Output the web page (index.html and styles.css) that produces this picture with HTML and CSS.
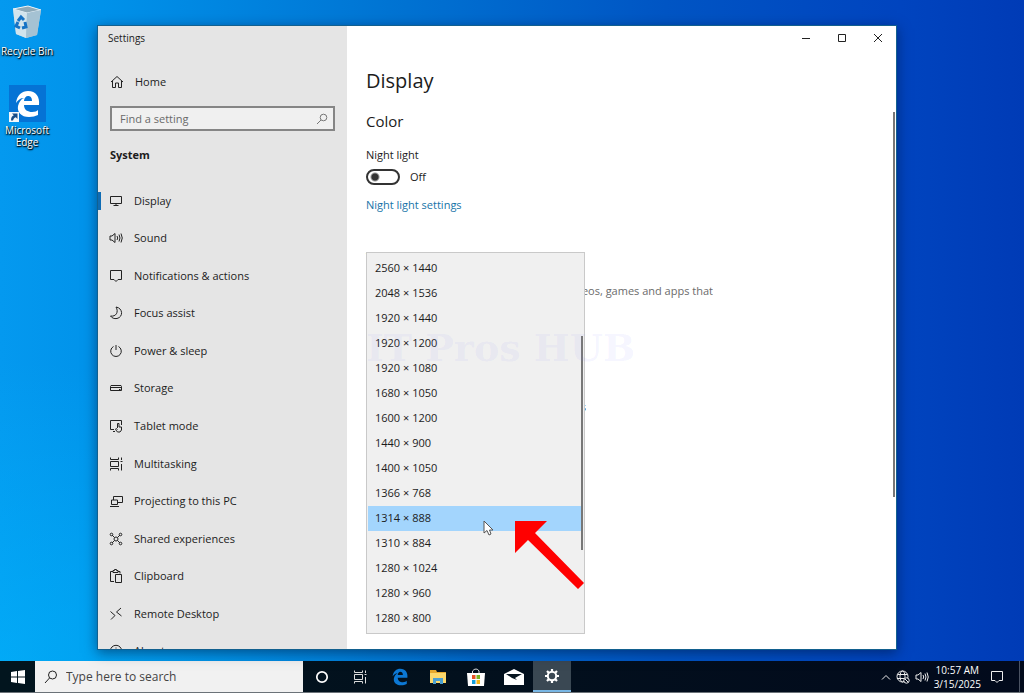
FILE: index.html
```html
<!DOCTYPE html>
<html lang="en">
<head>
<meta charset="utf-8">
<meta name="viewport" content="width=device-width, initial-scale=1">
<title>Settings - Display</title>
<link rel="stylesheet" href="styles.css">
</head>
<body>
<main class="desktop">
  <div class="shortcuts">
    <a class="shortcut" href="#bin">
      <svg width="34" height="38" viewBox="0 0 34 38">
        <path d="M3 4 18 1 31 5 27 30 16 33 6 29Z" fill="#b9d3e2"/>
        <path d="M3 4 18 1 31 5 17 8Z" fill="#8ea9b8" stroke="#e8f3fa"/>
        <path d="M3 4 17 8 16 33 6 29Z" fill="#d5e5ee" opacity=".9"/>
        <path d="M17 8 31 5 27 30 16 33Z" fill="#a5c2d3"/>
        <path d="M8 16 11 12 14 15M15 17 16 22 12 23M10 23 6 21 8 17" fill="none" stroke="#1673c5" stroke-width="3"/>
      </svg>
      <span>Recycle Bin</span>
    </a>
    <a class="shortcut" href="#edge">
      <svg width="37" height="37" viewBox="0 0 37 37">
        <path d="M0 0H37V37H0Z" fill="#0573d5"/>
        <path d="M7 18C8 10 13 6 19 6C27 6 31 12 30 20H15C15 25 19 27 23 27C26 27 28 26 29 25V30C26 31 24 32 20 32C12 32 8 27 9 21C10 17 12 14 15 13C11 13 9 15 7 18ZM15 16H23C23 12 21 11 19 11C17 11 15 13 15 16Z" fill="#fff" fill-rule="evenodd"/>
        <path d="M0 27H10V37H0Z" fill="#f4f8fb"/>
        <path d="M3 28.500H8.500V34L6.800 32.300C5 33 4.500 34 4 35.500H2C2 32.500 3 31 4.800 30.300Z" fill="#174c87"/>
      </svg>
      <span>Microsoft Edge</span>
    </a>
  </div>

  <section class="window" aria-label="Settings">
    <aside class="sidebar">
      <h1 class="caption">Settings</h1>
      <a class="home" href="#home">
        <svg class="icon" viewBox="0 0 14 14"><path d="M1 7 7 1.500 13 7M2.500 6V12.500H5.500V8H8.500V12.500H11.500V6"/></svg>
        Home
      </a>
      <div class="search">
        <input type="search" placeholder="Find a setting" aria-label="Find a setting">
        <svg width="12" height="12" viewBox="0 0 12 12"><circle cx="7.500" cy="4.500" r="3.300"/><path d="M5 7 1 11"/></svg>
      </div>
      <h2 class="group">System</h2>
      <nav class="nav">
        <a class="current" href="#display"><svg class="icon" viewBox="0 0 14 14"><path d="M1.500 2.500H12.500V9.500H1.500ZM7 9.500V12M4.500 11.500H9.500"/></svg>Display</a>
        <a href="#sound"><svg class="icon" viewBox="0 0 14 14"><path d="M1 5H3L6 2.500V11.500L3 9H1ZM8 5Q9.500 7 8 9M10 3.500Q12 7 10 10.500M12 2.500Q14.500 7 12 11.500"/></svg>Sound</a>
        <a href="#notifications"><svg class="icon" viewBox="0 0 14 14"><path d="M1.500 1.500H12.500V10.500H9L7 12.500 5 10.500H1.500Z"/></svg>Notifications &amp; actions</a>
        <a href="#focus"><svg class="icon" viewBox="0 0 14 14"><path d="M7 1C14 2 14.500 11 8 12.500 5 13 3 12 1.500 10 7 11 10 6 7 1Z"/></svg>Focus assist</a>
        <a href="#power"><svg class="icon" viewBox="0 0 14 14"><path d="M4.500 2.500A5.300 5.300 0 1 0 9.500 2.500M7 1V6"/></svg>Power &amp; sleep</a>
        <a href="#storage"><svg class="icon" viewBox="0 0 14 14"><path d="M2 4.500H12L12.500 5.500V9.500H1.500V5.500ZM1.500 6.500H12.500M10 8.500H11.500"/></svg>Storage</a>
        <a href="#tablet"><svg class="icon" viewBox="0 0 14 14"><path d="M5 10.500H1.500V1.500H12.500V6M4 12.500H6M8.500 9V4.500H10V8H12.500V11L11 13H8.500L6.500 10.500 7 9.500 8.500 10.500"/></svg>Tablet mode</a>
        <a href="#multitasking"><svg class="icon" viewBox="0 0 14 14"><path d="M1.500 .5V2.500H9.500V.5M1.500 4.500H9.500V9.500H1.500ZM1.500 13.500V11.500H9.500V13.500M12.500 .5V3M12.500 7V13.500M11.500 4.500H13.500"/></svg>Multitasking</a>
        <a href="#projecting"><svg class="icon" viewBox="0 0 14 14"><path d="M4.500 6V2.500H13.500V8.500H9M2.500 6H8.500V10.500H2.500ZM1 12.500H10"/></svg>Projecting to this PC</a>
        <a href="#shared"><svg class="icon" viewBox="0 0 14 14"><path d="M3 3 5.500 5.500M11 3 8.500 5.500M3 11 5.500 8.500M11 11 8.500 8.500"/><circle cx="2.500" cy="2.500" r="1.300"/><circle cx="11.500" cy="2.500" r="1.300"/><circle cx="2.500" cy="11.500" r="1.300"/><circle cx="11.500" cy="11.500" r="1.300"/><circle cx="7" cy="7" r="2"/></svg>Shared experiences</a>
        <a href="#clipboard"><svg class="icon" viewBox="0 0 14 14"><path d="M5 12.500H1.500V2.500H4M9 2.500H11V4.500M4 1.500H5.500V.5H7.500V1.500H9V3.500H4ZM6.500 5.500H12.500V13.500H6.500Z"/></svg>Clipboard</a>
        <a href="#remote"><svg class="icon" viewBox="0 0 14 14"><path d="M1.500 4.500 6 8.500 2 12.500M12 1 7.500 5 12.500 9"/></svg>Remote Desktop</a>
        <a href="#about"><svg class="icon" viewBox="0 0 14 14"><circle cx="7" cy="7" r="5.700"/><path d="M7 6V10M7 3.500V4.500"/></svg>About</a>
      </nav>
    </aside>

    <div class="content">
      <div class="controls">
        <button type="button" aria-label="Minimize"><svg width="10" height="10" viewBox="0 0 10 10"><path d="M1 5.500H9"/></svg></button>
        <button type="button" aria-label="Maximize"><svg width="10" height="10" viewBox="0 0 10 10"><path d="M1.500 1.500H8.500V8.500H1.500Z"/></svg></button>
        <button type="button" aria-label="Close"><svg width="10" height="10" viewBox="0 0 10 10"><path d="M1 1 9 9M9 1 1 9"/></svg></button>
      </div>
      <div class="page">
        <h2 class="title">Display</h2>
        <h3 class="heading">Color</h3>
        <label class="label" for="night">Night light</label>
        <div class="toggle"><input id="night" type="checkbox" role="switch"><span>Off</span></div>
        <a class="link" href="#night-settings">Night light settings</a>
        <h3 class="heading heading-hd">Windows HD Color</h3>
        <p class="note">Get a brighter and more vibrant picture in videos, games and apps that</p>
        <p class="size-label">Change the size of text, apps, and other items</p>
        <div class="popup">
          <select size="15" aria-label="Display resolution">
            <option>2560 × 1440</option>
            <option>2048 × 1536</option>
            <option>1920 × 1440</option>
            <option>1920 × 1200</option>
            <option>1920 × 1080</option>
            <option>1680 × 1050</option>
            <option>1600 × 1200</option>
            <option>1440 × 900</option>
            <option>1400 × 1050</option>
            <option>1366 × 768</option>
            <option selected>1314 × 888</option>
            <option>1310 × 884</option>
            <option>1280 × 1024</option>
            <option>1280 × 960</option>
            <option>1280 × 800</option>
          </select>
          <span class="popup-scroll"></span>
          <svg class="pointer" width="11" height="17" viewBox="0 0 11 17"><path d="M1 1V13L4 10.500 6 15 8 14 6.500 10H10Z" fill="#fff" stroke="#555"/></svg>
          <svg class="arrow" width="70" height="70" viewBox="0 0 70 70"><path d="M0 0H32L20 12 69 62 63 68 13 19 0 32Z" fill="#f00"/></svg>
        </div>
        <span class="watermark">IT Pros HUB</span>
      </div>
      <span class="page-scroll"></span>
    </div>
  </section>
</main>

<footer class="taskbar">
  <button class="start" type="button" aria-label="Start"><svg width="14" height="14" viewBox="0 0 14 14" fill="#fff"><path d="M0 2 6 1V6.500H0ZM7 1 14 0V6.500H7ZM0 7.500H6V13L0 12ZM7 7.500H14V14L7 13Z"/></svg></button>
  <div class="find">
    <svg width="14" height="14" viewBox="0 0 14 14"><circle cx="8.500" cy="5" r="4"/><path d="M5.500 8 1 13"/></svg>
    <input type="text" placeholder="Type here to search" aria-label="Type here to search">
  </div>
  <div class="apps">
    <button type="button" aria-label="Cortana"><svg width="14" height="14" viewBox="0 0 14 14"><circle cx="7" cy="7" r="5.200" fill="none" stroke="#fff" stroke-width="1.700"/></svg></button>
    <button type="button" aria-label="Task View"><svg width="14" height="14" viewBox="0 0 14 14"><path d="M1.500 .5V2.500H9.500V.5M1.500 4.500H9.500V9.500H1.500ZM1.500 13.500V11.500H9.500V13.500M12.500 .5V3M12.500 7V13.500M11.500 4.500H13.500" fill="none" stroke="#ddd"/></svg></button>
  </div>
  <div class="apps">
    <button type="button" aria-label="Edge"><svg width="18" height="18" viewBox="5 5 27 28"><path d="M7 18C8 10 13 6 19 6C27 6 31 12 30 20H15C15 25 19 27 23 27C26 27 28 26 29 25V30C26 31 24 32 20 32C12 32 8 27 9 21C10 17 12 14 15 13C11 13 9 15 7 18ZM15 16H23C23 12 21 11 19 11C17 11 15 13 15 16Z" fill="#0c78d4" fill-rule="evenodd"/></svg></button>
    <button type="button" aria-label="File Explorer"><svg width="18" height="16" viewBox="0 0 18 16"><path d="M1 1H7L8 3H17V14H1Z" fill="#e6a92e"/><path d="M1 4H17V14H1Z" fill="#fbd86c"/><path d="M4 15V9H14V15H11V12H7V15Z" fill="#4b9fd0"/></svg></button>
    <button type="button" aria-label="Store"><svg width="18" height="18" viewBox="0 0 18 18"><path d="M5.500 6V3Q7 1 9 1T12 3V6" fill="none" stroke="#ddd"/><path d="M0 5H18L17 18H1Z" fill="#fff"/><path d="M5 7H8.500V11H5Z" fill="#e85125"/><path d="M9.500 7H13V11H9.500Z" fill="#7cb51f"/><path d="M5 12H8.500V16H5Z" fill="#159edb"/><path d="M9.500 12H13V16H9.500Z" fill="#f4b41a"/></svg></button>
    <button type="button" aria-label="Mail"><svg width="20" height="16" viewBox="0 0 20 16"><path d="M0 5 10 0 20 5V16H0Z" fill="#fff"/><path d="M2 5H18L11 9 13 11 8 9Z" fill="#071520"/></svg></button>
    <button class="running" type="button" aria-label="Settings"><svg width="16" height="16" viewBox="0 0 16 16" fill="none" stroke="#fff"><circle cx="8" cy="8" r="4.200" stroke-width="2"/><path d="M8 1V4M8 12V15M1 8H4M12 8H15M3 3 5 5M11 11 13 13M13 3 11 5M5 11 3 13" stroke-width="2.200"/></svg></button>
  </div>
  <div class="tray">
    <svg width="10" height="10" viewBox="0 0 10 10"><path d="M1 7.500 5 3.500 9 7.500"/></svg>
    <svg width="14" height="14" viewBox="0 0 14 14"><circle cx="6.500" cy="6.500" r="5.500"/><ellipse cx="6.500" cy="6.500" rx="2.500" ry="5.500"/><path d="M1.500 4.500H11.500M1 8.500H8"/><circle cx="10.500" cy="10.500" r="2.700" fill="#020b1c"/><path d="M9 9 12 12"/></svg>
    <svg width="14" height="14" viewBox="0 0 14 14"><path d="M1 5H3L6 2.500V11.500L3 9H1ZM8 5Q9.500 7 8 9M10 3.500Q12 7 10 10.500M12 2.500Q14.500 7 12 11.500"/></svg>
    <time class="clock" datetime="2025-03-15T10:57"><span>10:57 AM</span><span>3/15/2025</span></time>
    <svg class="center" width="14" height="14" viewBox="0 0 14 14"><path d="M1.500 1.500H12.500V10.500H9L7 12.500 5 10.500H1.500Z"/></svg>
  </div>
</footer>
</body>
</html>
```
FILE: styles.css
```css
* {
  box-sizing: border-box;
}

body {
  margin: 0;
  height: 100vh;
  display: grid;
  grid-template-rows: 1fr 32px;
  overflow: hidden;
  font: 11px/16px "Open Sans", "Noto Sans", sans-serif;
  color: #1c1c1c;
}

h1, h2, h3, p {
  margin: 0;
  font-size: inherit;
  font-weight: 400;
}

a {
  color: inherit;
  text-decoration: none;
}

button {
  padding: 0;
  border: 0;
  background: none;
}

svg {
  flex: none;
}

input, select {
  font: inherit;
  color: inherit;
}

.desktop {
  position: relative;
  min-height: 0;
  background:
    radial-gradient(ellipse 480px 300px at 0 100%, rgba(0, 190, 255, .45), transparent),
    linear-gradient(90deg, #0499ef 0%, #0092ea 10%, #0074d3 38%, #0055c4 65%, #0044bf 88%, #003bb6 100%);
}

.shortcuts {
  display: flex;
  flex-direction: column;
  gap: 28px;
  width: 54px;
  padding-top: 5px;
}

.shortcut {
  display: flex;
  flex-direction: column;
  align-items: center;
  gap: 2px;
  font-size: 10px;
  line-height: 12px;
  color: #fff;
  text-align: center;
  text-shadow: 0 1px 2px #000, 1px 1px 1px #000;
}

.shortcut:first-child span {
  white-space: nowrap;
}

.window {
  position: absolute;
  top: 25px;
  right: 127px;
  bottom: 11px;
  left: 97px;
  display: grid;
  grid-template-columns: 249px 1fr;
  overflow: hidden;
  border: 1px solid #12608f;
  background: #fff;
  box-shadow: 0 3px 12px rgba(0, 15, 50, .5);
}

.sidebar {
  display: flex;
  flex-direction: column;
  min-height: 0;
  background: #e5e5e5;
}

.sidebar > * {
  flex: none;
}

.caption {
  padding: 4px 10px;
  font-size: 10px;
}

.home {
  display: flex;
  align-items: center;
  gap: 11px;
  margin-top: 23px;
  padding: 0 12px;
  line-height: 18px;
}

.icon {
  width: 14px;
  height: 14px;
  fill: none;
  stroke: #222;
}

.search {
  display: flex;
  align-items: center;
  height: 25px;
  margin: 15px 12px 0;
  padding: 0 5px 0 8px;
  border: 2px solid #858585;
  background: #f0f0f0;
}

.search input {
  flex: 1;
  min-width: 0;
  padding: 0;
  border: 0;
  background: none;
  outline: 0;
}

.search input::placeholder {
  color: #6a6a6a;
  opacity: 1;
}

.search svg {
  fill: none;
  stroke: #777;
}

.group {
  margin: 16px 12px 19px;
  font-weight: 700;
}

.nav {
  display: grid;
  grid-template-rows: repeat(13, 1fr);
  height: 488px;
}

.nav a {
  display: flex;
  align-items: center;
  gap: 11px;
  padding: 0 11px;
}

.nav .current {
  background: linear-gradient(#0f6cb4, #0f6cb4) left center / 3px 18px no-repeat;
}

.content {
  position: relative;
  min-width: 0;
}

.controls {
  display: flex;
  justify-content: flex-end;
}

.controls button {
  width: 36px;
  height: 24px;
}

.controls svg {
  fill: none;
  stroke: #222;
}

.page {
  position: relative;
  display: flex;
  flex-direction: column;
  align-items: flex-start;
  padding: 15px 19px;
}

.title {
  font-size: 20px;
  line-height: 32px;
}

.heading {
  margin-top: 14px;
  font-size: 15px;
  line-height: 20px;
}

.label {
  margin-top: 16px;
}

.toggle {
  display: flex;
  align-items: center;
  gap: 10px;
  margin-top: 6px;
}

.toggle input {
  appearance: none;
  width: 34px;
  height: 16px;
  margin: 0;
  border: 2px solid #333;
  border-radius: 8px;
  background: radial-gradient(circle at 7px 6px, #333 3px, transparent 5px);
}

.link {
  margin-top: 12px;
  color: #1674a8;
}

.heading-hd {
  margin-top: 34px;
}

.note,
.size-label {
  display: flex;
  justify-content: flex-end;
  overflow: hidden;
  white-space: nowrap;
}

.note {
  width: 347px;
  margin-top: 16px;
  color: #6b6b6b;
}

.size-label {
  width: 220px;
  margin-top: 100px;
}

.popup {
  position: absolute;
  top: 202px;
  left: 19px;
  width: 219px;
}

.popup select {
  appearance: none;
  display: block;
  width: 100%;
  height: 382px;
  padding: 3px 1px 2px;
  border: 1px solid #c9c9c9;
  border-radius: 0;
  background: #f0f0f0;
  overflow: hidden;
  outline: 0;
}

.popup option {
  min-height: 25px;
  padding: 4px 7px;
  line-height: 17px;
}

.popup option:checked {
  background: #a3d5fd linear-gradient(#a3d5fd, #a3d5fd);
  color: #1c1c1c;
}

.popup-scroll {
  position: absolute;
  top: 84px;
  right: 2px;
  width: 2px;
  height: 214px;
  background: #777;
}

.pointer {
  position: absolute;
  top: 268px;
  left: 117px;
}

.arrow {
  position: absolute;
  top: 269px;
  left: 149px;
}

.watermark {
  position: absolute;
  top: 274px;
  left: 19px;
  font: 700 38px/48px "DejaVu Serif", serif;
  color: rgba(120, 120, 255, .08);
  white-space: nowrap;
  pointer-events: none;
}

.page-scroll {
  position: absolute;
  top: 86px;
  right: 1px;
  width: 2px;
  height: 385px;
  background: #777;
}

.taskbar {
  display: flex;
  background: linear-gradient(90deg, #02151e, #020a1c);
  border-bottom: 1px solid #6b7278;
}

.start {
  display: grid;
  place-items: center;
  width: 35px;
}

.find {
  display: flex;
  align-items: center;
  gap: 8px;
  width: 268px;
  padding: 0 9px;
  background: #f1f1f1;
}

.find svg {
  fill: none;
  stroke: #222;
}

.find input {
  flex: 1;
  min-width: 0;
  padding: 0;
  border: 0;
  background: none;
  outline: 0;
  font-size: 12px;
}

.find input::placeholder {
  color: #444;
  opacity: 1;
}

.apps {
  display: flex;
  margin-right: 2px;
}

.apps button {
  display: grid;
  place-items: center;
  width: 38px;
}

.apps .running {
  background: #3a4853;
  border-bottom: 2px solid #78b6e4;
}

.tray {
  display: flex;
  align-items: center;
  gap: 5px;
  margin-left: auto;
  margin-right: 4px;
  padding-right: 15px;
  border-right: 1px solid #4b5363;
  color: #fff;
}

.tray svg {
  fill: none;
  stroke: #eee;
}

.clock {
  display: flex;
  flex-direction: column;
  align-items: center;
  font-size: 10px;
  line-height: 14px;
}

.center {
  margin-left: 4px;
}
```
